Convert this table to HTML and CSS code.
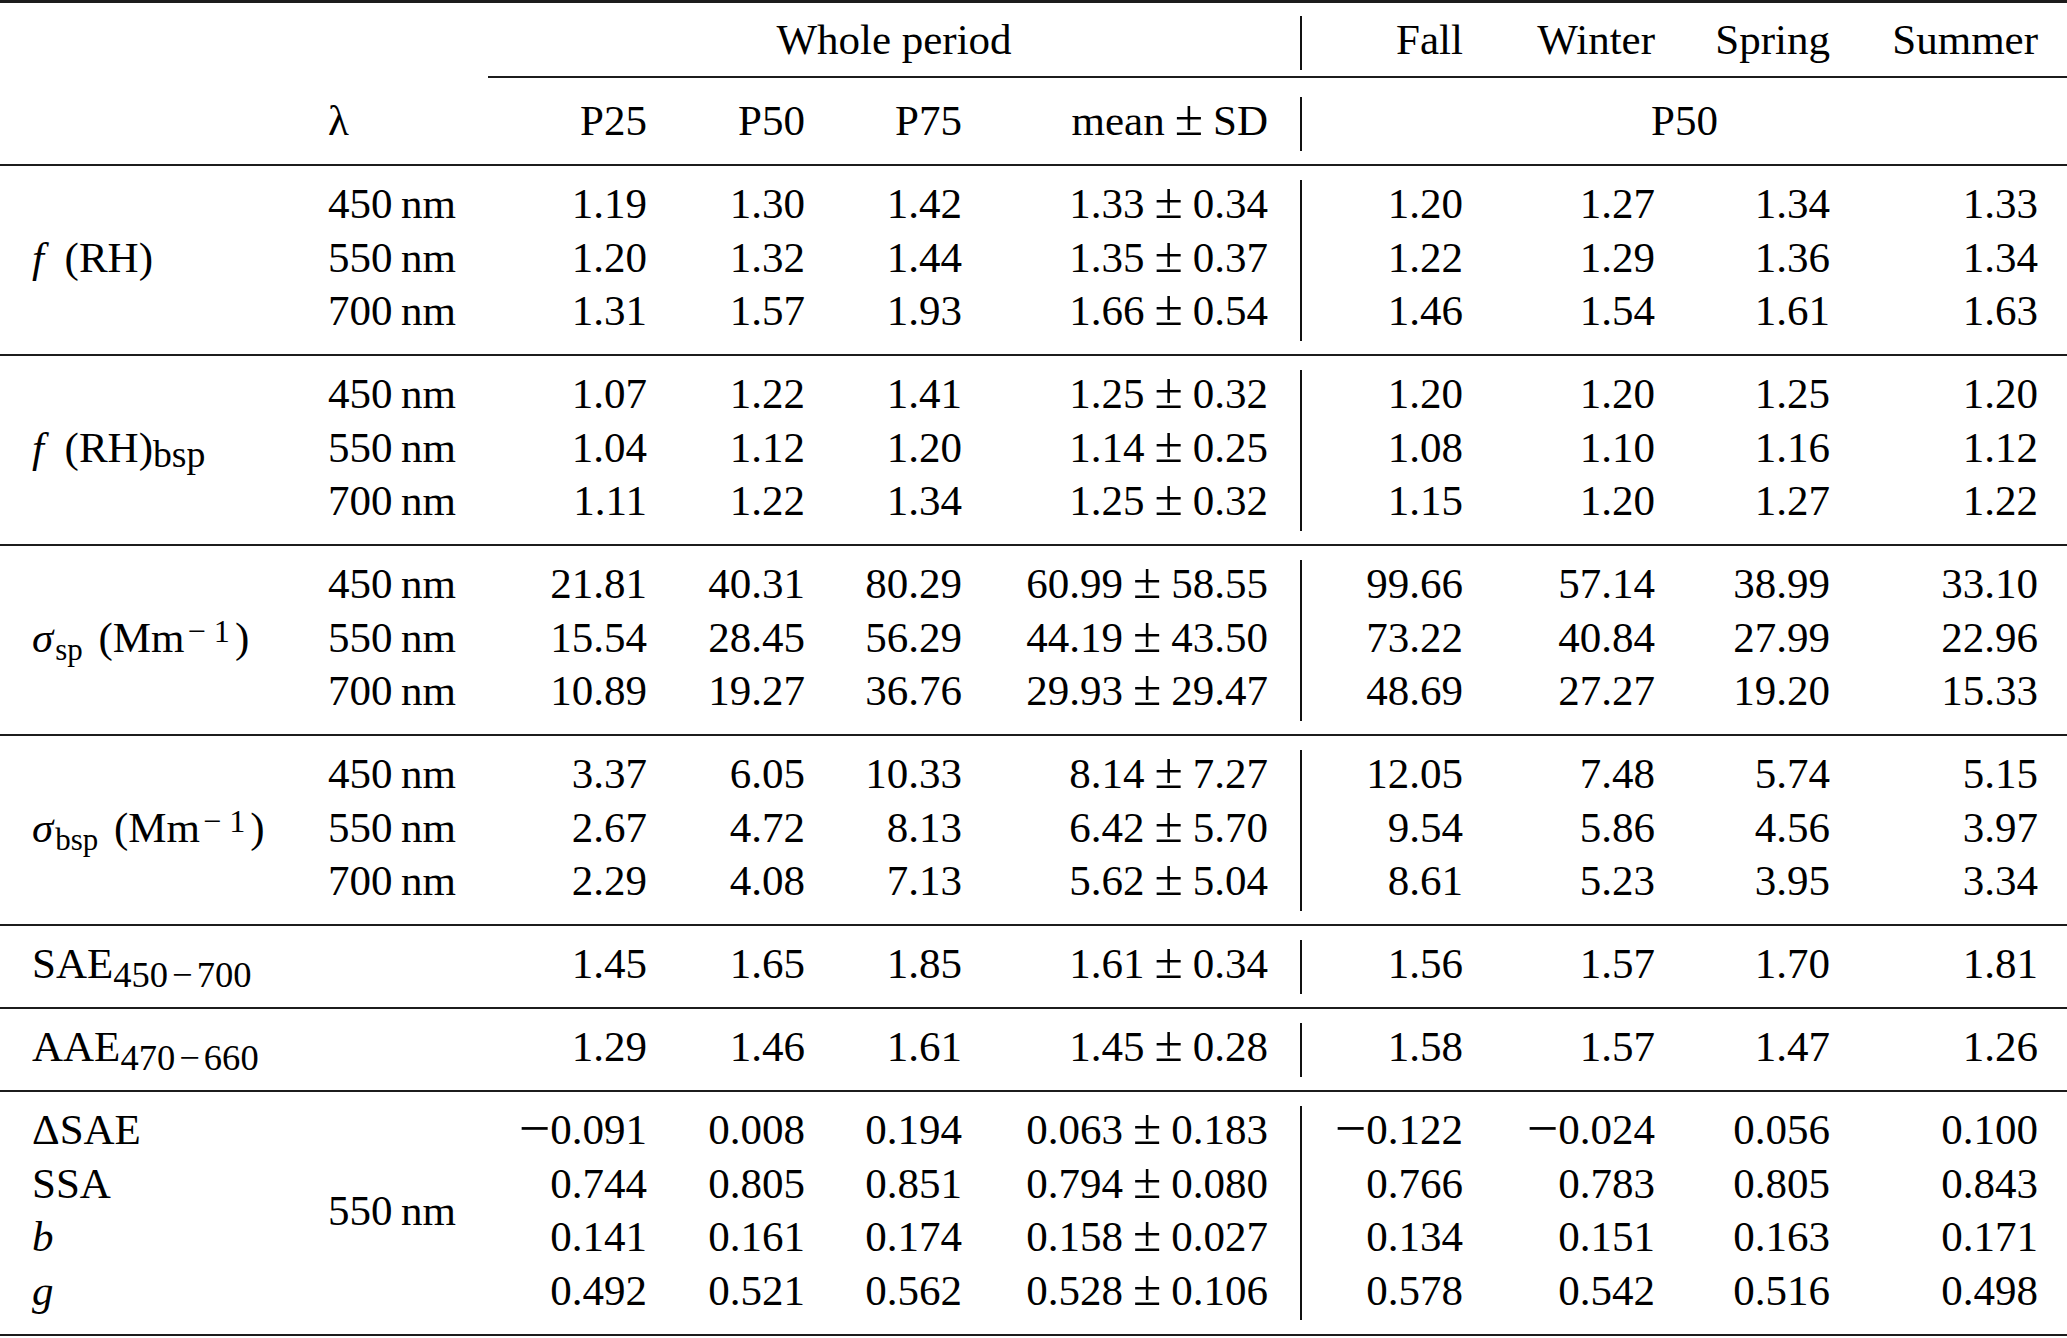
FILE: index.html
```html
<!DOCTYPE html>
<html lang="en">
<head>
<meta charset="utf-8">
<title>Aerosol optical properties table</title>
<link rel="stylesheet" href="styles.css">
</head>
<body>
<div class="tbl">
  <div class="grid head1">
    <div class="c"></div>
    <div class="c"></div>
    <div class="c span-whole">Whole period</div>
    <div class="c r vl">Fall</div>
    <div class="c r">Winter</div>
    <div class="c r">Spring</div>
    <div class="c r last">Summer</div>
  </div>
  <div class="cmid"></div>
  <div class="grid head2">
    <div class="c"></div>
    <div class="c">λ</div>
    <div class="c r">P25</div>
    <div class="c r">P50</div>
    <div class="c r">P75</div>
    <div class="c r mean">mean<span class="pm">±</span>SD</div>
    <div class="c span-season vl">P50</div>
  </div>

  <div class="grid grp">
    <div class="c lab"></div><div class="c">450&#8201;nm</div>
    <div class="c r">1.19</div><div class="c r">1.30</div><div class="c r">1.42</div><div class="c r mean">1.33<span class="pm">±</span>0.34</div>
    <div class="c r vl">1.20</div><div class="c r">1.27</div><div class="c r">1.34</div><div class="c r last">1.33</div>
    <div class="c lab"><i class="f">f</i>(RH)</div><div class="c">550&#8201;nm</div>
    <div class="c r">1.20</div><div class="c r">1.32</div><div class="c r">1.44</div><div class="c r mean">1.35<span class="pm">±</span>0.37</div>
    <div class="c r vl">1.22</div><div class="c r">1.29</div><div class="c r">1.36</div><div class="c r last">1.34</div>
    <div class="c lab"></div><div class="c">700&#8201;nm</div>
    <div class="c r">1.31</div><div class="c r">1.57</div><div class="c r">1.93</div><div class="c r mean">1.66<span class="pm">±</span>0.54</div>
    <div class="c r vl">1.46</div><div class="c r">1.54</div><div class="c r">1.61</div><div class="c r last">1.63</div>
  </div>

  <div class="grid grp">
    <div class="c lab"></div><div class="c">450&#8201;nm</div>
    <div class="c r">1.07</div><div class="c r">1.22</div><div class="c r">1.41</div><div class="c r mean">1.25<span class="pm">±</span>0.32</div>
    <div class="c r vl">1.20</div><div class="c r">1.20</div><div class="c r">1.25</div><div class="c r last">1.20</div>
    <div class="c lab"><i class="f">f</i>(RH)<sub class="s1">bsp</sub></div><div class="c">550&#8201;nm</div>
    <div class="c r">1.04</div><div class="c r">1.12</div><div class="c r">1.20</div><div class="c r mean">1.14<span class="pm">±</span>0.25</div>
    <div class="c r vl">1.08</div><div class="c r">1.10</div><div class="c r">1.16</div><div class="c r last">1.12</div>
    <div class="c lab"></div><div class="c">700&#8201;nm</div>
    <div class="c r">1.11</div><div class="c r">1.22</div><div class="c r">1.34</div><div class="c r mean">1.25<span class="pm">±</span>0.32</div>
    <div class="c r vl">1.15</div><div class="c r">1.20</div><div class="c r">1.27</div><div class="c r last">1.22</div>
  </div>

  <div class="grid grp">
    <div class="c lab"></div><div class="c">450&#8201;nm</div>
    <div class="c r">21.81</div><div class="c r">40.31</div><div class="c r">80.29</div><div class="c r mean">60.99<span class="pm">±</span>58.55</div>
    <div class="c r vl">99.66</div><div class="c r">57.14</div><div class="c r">38.99</div><div class="c r last">33.10</div>
    <div class="c lab"><i class="sig">σ</i><sub class="s2">sp</sub> (Mm<sup><span class="sm">−</span>1</sup>)</div><div class="c">550&#8201;nm</div>
    <div class="c r">15.54</div><div class="c r">28.45</div><div class="c r">56.29</div><div class="c r mean">44.19<span class="pm">±</span>43.50</div>
    <div class="c r vl">73.22</div><div class="c r">40.84</div><div class="c r">27.99</div><div class="c r last">22.96</div>
    <div class="c lab"></div><div class="c">700&#8201;nm</div>
    <div class="c r">10.89</div><div class="c r">19.27</div><div class="c r">36.76</div><div class="c r mean">29.93<span class="pm">±</span>29.47</div>
    <div class="c r vl">48.69</div><div class="c r">27.27</div><div class="c r">19.20</div><div class="c r last">15.33</div>
  </div>

  <div class="grid grp">
    <div class="c lab"></div><div class="c">450&#8201;nm</div>
    <div class="c r">3.37</div><div class="c r">6.05</div><div class="c r">10.33</div><div class="c r mean">8.14<span class="pm">±</span>7.27</div>
    <div class="c r vl">12.05</div><div class="c r">7.48</div><div class="c r">5.74</div><div class="c r last">5.15</div>
    <div class="c lab"><i class="sig">σ</i><sub class="s2">bsp</sub> (Mm<sup><span class="sm">−</span>1</sup>)</div><div class="c">550&#8201;nm</div>
    <div class="c r">2.67</div><div class="c r">4.72</div><div class="c r">8.13</div><div class="c r mean">6.42<span class="pm">±</span>5.70</div>
    <div class="c r vl">9.54</div><div class="c r">5.86</div><div class="c r">4.56</div><div class="c r last">3.97</div>
    <div class="c lab"></div><div class="c">700&#8201;nm</div>
    <div class="c r">2.29</div><div class="c r">4.08</div><div class="c r">7.13</div><div class="c r mean">5.62<span class="pm">±</span>5.04</div>
    <div class="c r vl">8.61</div><div class="c r">5.23</div><div class="c r">3.95</div><div class="c r last">3.34</div>
  </div>

  <div class="grid grp">
    <div class="c lab">SAE<sub class="s3">450<span class="sm">−</span>700</sub></div><div class="c"></div>
    <div class="c r">1.45</div><div class="c r">1.65</div><div class="c r">1.85</div><div class="c r mean">1.61<span class="pm">±</span>0.34</div>
    <div class="c r vl">1.56</div><div class="c r">1.57</div><div class="c r">1.70</div><div class="c r last">1.81</div>
  </div>

  <div class="grid grp">
    <div class="c lab">AAE<sub class="s3">470<span class="sm">−</span>660</sub></div><div class="c"></div>
    <div class="c r">1.29</div><div class="c r">1.46</div><div class="c r">1.61</div><div class="c r mean">1.45<span class="pm">±</span>0.28</div>
    <div class="c r vl">1.58</div><div class="c r">1.57</div><div class="c r">1.47</div><div class="c r last">1.26</div>
  </div>

  <div class="grid grp">
    <div class="c lab">ΔSAE</div><div class="c"></div>
    <div class="c r"><span class="neg">−</span>0.091</div><div class="c r">0.008</div><div class="c r">0.194</div><div class="c r mean">0.063<span class="pm">±</span>0.183</div>
    <div class="c r vl"><span class="neg">−</span>0.122</div><div class="c r"><span class="neg">−</span>0.024</div><div class="c r">0.056</div><div class="c r last">0.100</div>
    <div class="c lab">SSA</div><div class="c lam2">550&#8201;nm</div>
    <div class="c r">0.744</div><div class="c r">0.805</div><div class="c r">0.851</div><div class="c r mean">0.794<span class="pm">±</span>0.080</div>
    <div class="c r vl">0.766</div><div class="c r">0.783</div><div class="c r">0.805</div><div class="c r last">0.843</div>
    <div class="c lab"><i>b</i></div>
    <div class="c r">0.141</div><div class="c r">0.161</div><div class="c r">0.174</div><div class="c r mean">0.158<span class="pm">±</span>0.027</div>
    <div class="c r vl">0.134</div><div class="c r">0.151</div><div class="c r">0.163</div><div class="c r last">0.171</div>
    <div class="c lab"><i>g</i></div><div class="c"></div>
    <div class="c r">0.492</div><div class="c r">0.521</div><div class="c r">0.562</div><div class="c r mean">0.528<span class="pm">±</span>0.106</div>
    <div class="c r vl">0.578</div><div class="c r">0.542</div><div class="c r">0.516</div><div class="c r last">0.498</div>
  </div>
</div>
</body>
</html>
```

FILE: styles.css
```css
html, body {
  margin: 0;
  padding: 0;
  background: #ffffff;
}

body {
  font-family: "Liberation Serif", "Times New Roman", serif;
  font-size: 43px;
  color: #000000;
}

.tbl {
  width: 2067px;
  border-top: 3px solid #1c1c1c;
  border-bottom: 2px solid #1c1c1c;
}

.grid {
  display: grid;
  grid-template-columns: 328px 160px 159px 158px 157px 338px 163px 192px 175px 237px;
  grid-auto-rows: 53.5px;
}

.head1 {
  padding: 13px 0 6.5px;
}

.cmid {
  margin-left: 488px;
  height: 2px;
  background: #1c1c1c;
}

.head2 {
  padding: 19px 0 13.5px;
}

.grp {
  padding: 14px 0 13.5px;
  border-top: 2px solid #1c1c1c;
}

.c {
  line-height: 47.5px;
  white-space: nowrap;
}

.r {
  text-align: right;
}

.lab {
  padding-left: 32px;
}

.mean {
  padding-right: 32px;
}

.vl {
  border-left: 2px solid #111111;
}

.last {
  padding-right: 29px;
}

.span-whole {
  grid-column: 3 / 7;
  text-align: center;
}

.span-season {
  grid-column: 7 / 11;
  text-align: center;
}

.lam2 {
  grid-row: span 2;
  padding-top: 27px;
}

.pm {
  font-size: 1.2em;
  line-height: 0;
  margin: 0 10px;
}

.neg {
  font-size: 1.3em;
  line-height: 0;
  vertical-align: -3px;
}

i.f {
  margin-right: 0.48em;
}

i.sig {
  margin-right: 2px;
}

sub, sup {
  line-height: 0;
}

sub.s1 {
  font-size: 0.88em;
  vertical-align: -5px;
}

sub.s2 {
  font-size: 0.72em;
  vertical-align: -8px;
  margin-right: 5px;
}

sub.s3 {
  font-size: 0.85em;
  vertical-align: -9px;
}

sub.s3 .sm {
  margin: 0 4px;
}

sup {
  font-size: 0.75em;
  vertical-align: 10px;
  padding: 0 5px 0 3px;
}

sup .sm {
  margin-right: 0.25em;
}
```
